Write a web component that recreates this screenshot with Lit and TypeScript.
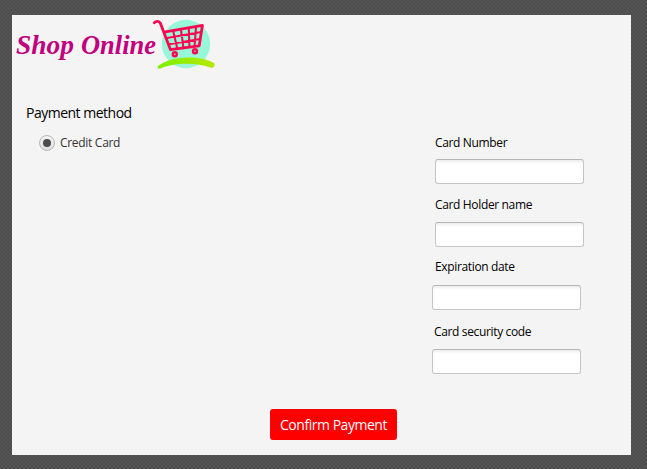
import { LitElement, html, css, svg } from "lit";
import { customElement, property } from "lit/decorators.js";

@customElement("shop-logo")
class ShopLogo extends LitElement {
  static styles = css`
    :host { display: block; }
    svg { display: block; }
    .word {
      font: italic 700 28px "Liberation Serif", serif;
      fill: #c1007e;
    }
    .cart { fill: none; stroke: #fb0751; stroke-linecap: round; stroke-linejoin: round; }
  `;
  render() {
    return html`<svg width="206" height="60" viewBox="12 15 206 60">
      <defs>
        <linearGradient id="hill"><stop offset="0" stop-color="#7df000" /><stop offset="1" stop-color="#b4e800" /></linearGradient>
      </defs>
      <circle cx="186" cy="44" r="24.2" fill="#99f7d9" />
      ${svg`<g class="cart">
        <path stroke-width="2.8" d="M154.3 22.8C156.2 20.9 159 21 160.4 23.2L170.4 49.6L199.2 45.8L202.4 25.4L165.4 31.8" />
        <path stroke-width="2.1" d="M167 38L201.3 32M169 44.2L200 39M173.2 31.2L177.2 48.2M181 29.8L183.4 47.4M188.8 28.6L189.4 46.6M196 27.4L194.6 46" />
        <circle cx="174.8" cy="54.2" r="2" stroke-width="2.4" />
        <circle cx="195" cy="51.3" r="2" stroke-width="2.4" />
      </g>`}
      <path fill="url(#hill)" d="M158.4 65.8C171 55.8 199 54.7 213.6 62.8C215.8 65 213.6 68.6 211.2 67.7C196 62.2 173 62.5 160 68.8C158 69.1 156.8 67.4 158.4 65.8Z" />
      <text class="word" x="16" y="54" textLength="58" lengthAdjust="spacingAndGlyphs">Shop</text>
      <text class="word" x="81" y="54" textLength="75" lengthAdjust="spacingAndGlyphs">Online</text>
    </svg>`;
  }
}

@customElement("card-field")
class CardField extends LitElement {
  @property() label = "";
  static styles = css`
    :host { display: flex; flex-direction: column; }
    label {
      font: 12px/16px "Open Sans", sans-serif;
      letter-spacing: -0.35px;
      color: #000;
      padding-left: var(--indent, 0);
      margin-bottom: var(--gap, 9px);
      white-space: nowrap;
    }
    input {
      box-sizing: border-box;
      width: 149px;
      height: 25px;
      margin: 0;
      padding: 0 6px;
      border: 1px solid #c5c5c5;
      border-top-color: #b5b5b5;
      border-radius: 3px;
      background: linear-gradient(#ededed, #fff 4px);
      outline: none;
    }
  `;
  render() {
    return html`<label for="value">${this.label}</label><input id="value" type="text" />`;
  }
}

@customElement("app-root")
class AppRoot extends LitElement {
  static styles = css`
    :host {
      display: block;
      box-sizing: border-box;
      width: 647px;
      height: 469px;
      padding: 15px 16px 14px 12px;
      overflow: hidden;
      font-family: "Open Sans", sans-serif;
      background-color: #4d4d4d;
      background-image: radial-gradient(#555 0.8px, transparent 1px), radial-gradient(#555 0.8px, transparent 1px);
      background-size: 4px 4px;
      background-position: 0 0, 2px 2px;
    }
    .panel {
      display: flex;
      flex-direction: column;
      height: 440px;
      background: #f4f4f4;
    }
    h1 {
      margin: 28px 0 0 14px;
      font-size: 14px;
      font-weight: 400;
      line-height: 20px;
      letter-spacing: -0.5px;
      color: #000;
    }
    .columns { display: grid; grid-template-columns: 420px 1fr; margin-top: 12px; }
    .method {
      display: flex;
      align-items: center;
      align-self: start;
      gap: 5px;
      height: 16px;
      padding-left: 27px;
      font-size: 12px;
      line-height: 16px;
      letter-spacing: -0.3px;
      color: #333;
    }
    .radio {
      display: grid;
      place-items: center;
      box-sizing: border-box;
      width: 16px;
      height: 16px;
      border: 1px solid #b7b7b7;
      border-radius: 50%;
      background: linear-gradient(#f5f5f5, #dedede);
    }
    .radio::after { content: ""; width: 8px; height: 8px; border-radius: 50%; background: #4c4c4c; }
    .fields { display: flex; flex-direction: column; padding-left: 3px; }
    .number { --gap: 8px; margin-bottom: 13px; }
    .holder { margin-bottom: 12px; }
    .expiry { --gap: 10px; --indent: 3px; margin: 0 0 14px -3px; }
    .code { --indent: 2px; margin-left: -3px; }
    button {
      align-self: flex-start;
      width: 127px;
      height: 31px;
      margin: 35px 0 0 258px;
      padding: 0;
      border: 0;
      border-radius: 3px;
      background: #f00;
      color: #fff;
      font: 14px/31px "Open Sans", sans-serif;
      letter-spacing: -0.47px;
    }
  `;
  render() {
    return html`<main class="panel">
      <shop-logo></shop-logo>
      <h1>Payment method</h1>
      <div class="columns">
        <div class="method" role="radio" aria-checked="true"><span class="radio"></span><span>Credit Card</span></div>
        <div class="fields">
          <card-field class="number" label="Card Number"></card-field>
          <card-field class="holder" label="Card Holder name"></card-field>
          <card-field class="expiry" label="Expiration date"></card-field>
          <card-field class="code" label="Card security code"></card-field>
        </div>
      </div>
      <button>Confirm Payment</button>
    </main>`;
  }
}
